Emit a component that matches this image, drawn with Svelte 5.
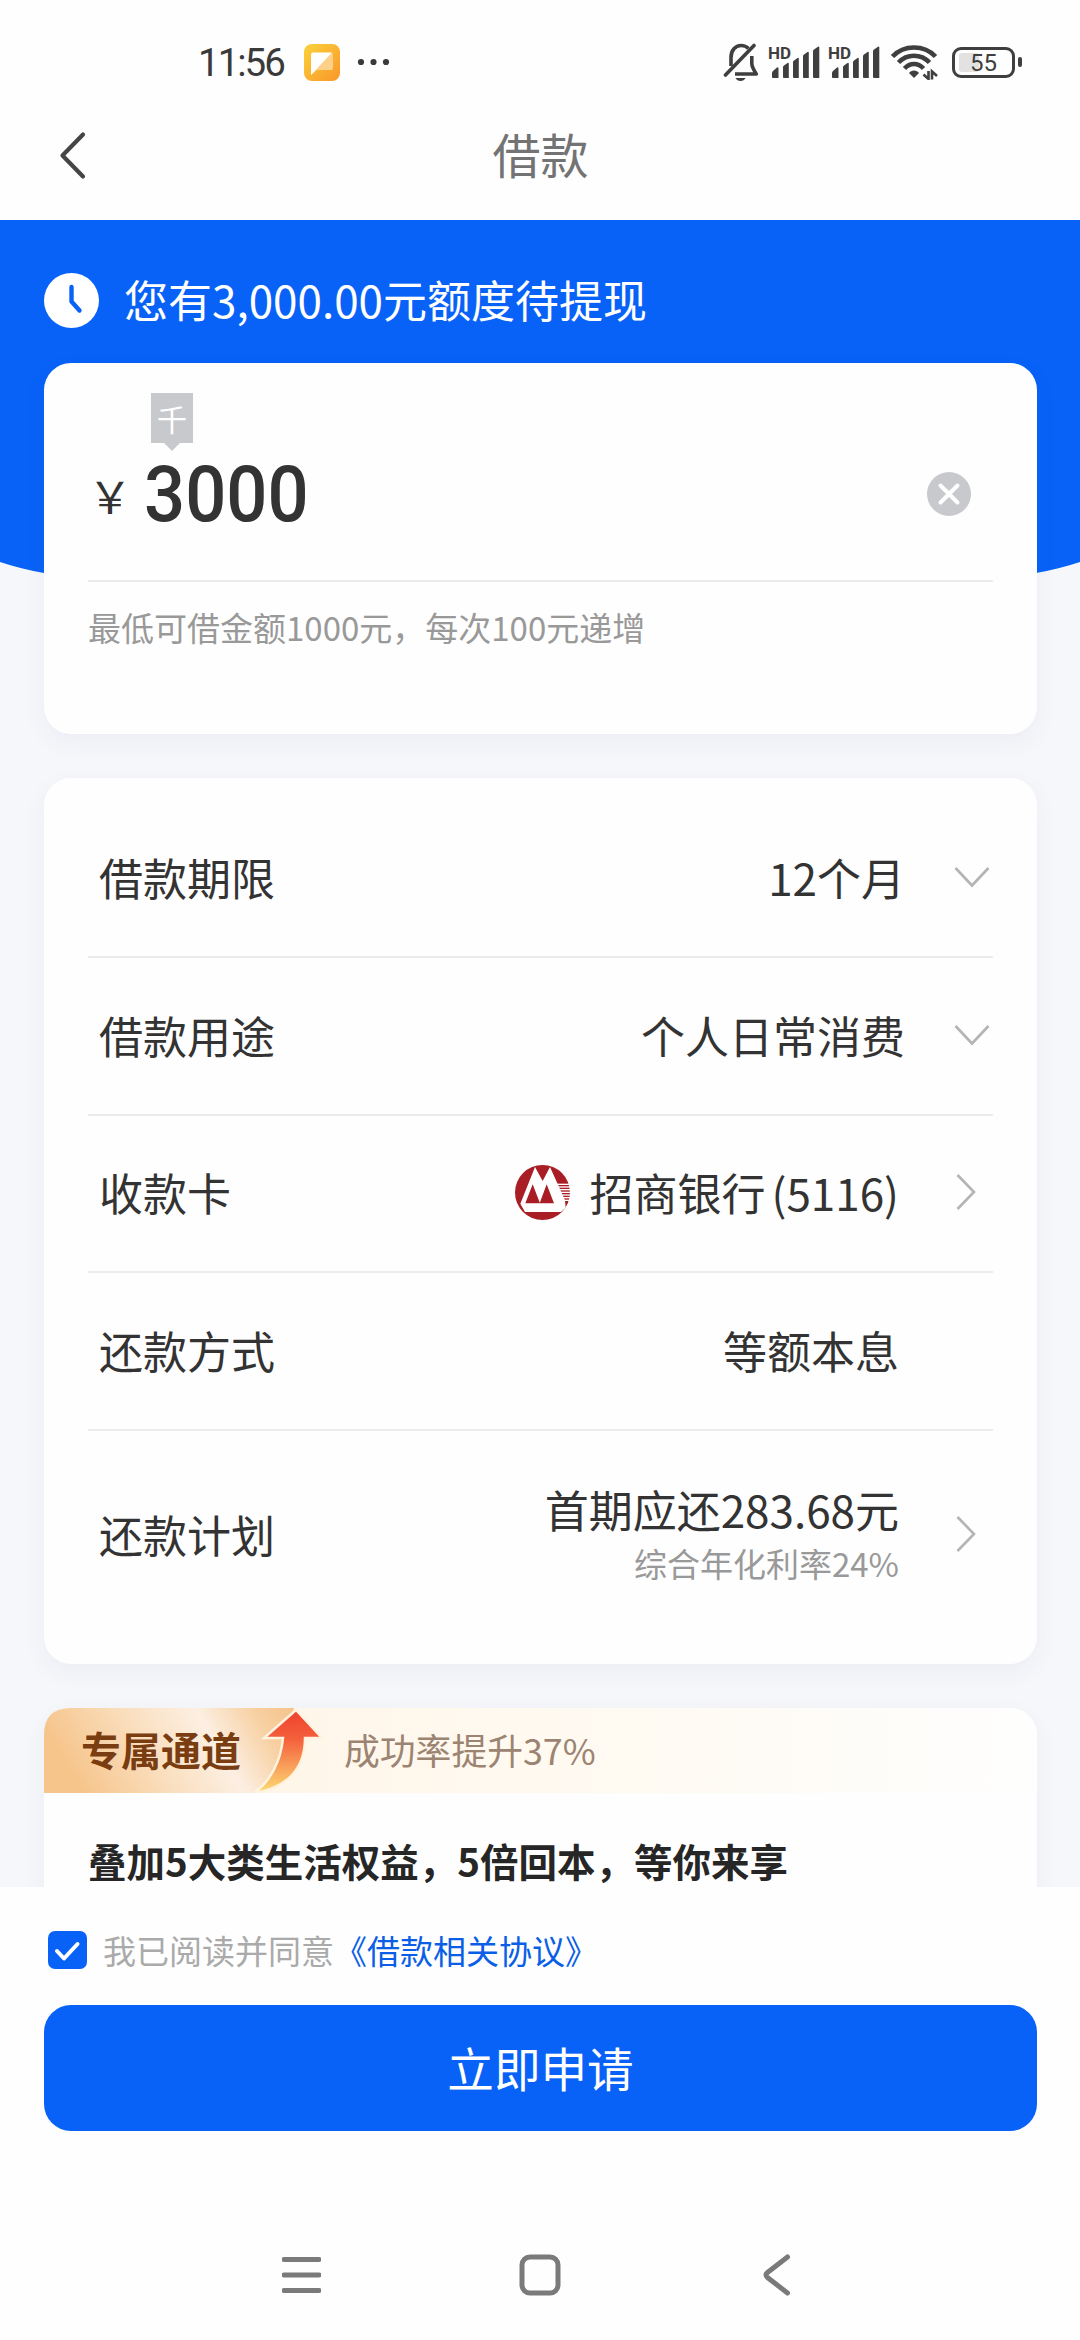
<script lang="ts">
  type Row = {
    label: string;
    value: string;
    arrow: 'down' | 'right' | 'none';
    card?: string;
    note?: string;
  };

  const currency = '\uffe5';
  const amount = '3000';
  const battery = 55;

  const rows: Row[] = [
    { label: '借款期限', value: '12个月', arrow: 'down' },
    { label: '借款用途', value: '个人日常消费', arrow: 'down' },
    { label: '收款卡', value: '招商银行', card: '(5116)', arrow: 'right' },
    { label: '还款方式', value: '等额本息', arrow: 'none' },
    { label: '还款计划', value: '首期应还283.68元', note: '综合年化利率24%', arrow: 'right' }
  ];

  const stripes = [58, 66, 74, 82, 90, 98, 106];
</script>

{#snippet signal()}
  <svg class="signal" width="51" height="34" viewBox="0 0 51 34">
    <text x="-1" y="13.500" class="hd">HD</text>
    <path d="M3 28q0-1 1-2l4-3.500q1.500-.8 1.500 1V33H4q-1 0-1-1z" />
    <path d="M14 22q0-1 1-1.600l3.500-2.400q1.300-.6 1.300.8V33H15q-1 0-1-1z" />
    <path d="M24 17q0-1 1-1.600l3.500-2.400q1.300-.6 1.300.8V33H25q-1 0-1-1z" />
    <path d="M34 11q0-1 1-1.600l3.500-2.400q1.300-.6 1.300.8V33H35q-1 0-1-1z" />
    <path d="M44 6q0-1 1-1.600l4-2.600q1.300-.6 1.300.8V33H45q-1 0-1-1z" />
  </svg>
{/snippet}

<div class="page">
  <header class="top">
    <div class="status-bar">
      <div class="status-left">
        <span class="time">11:56</span>
        <svg class="app-icon" width="36" height="37" viewBox="0 0 36 37">
          <defs>
            <linearGradient id="app-bg" x1="0" y1="0" x2="1" y2="1">
              <stop offset="0" stop-color="#fbd23a" />
              <stop offset="1" stop-color="#f9962a" />
            </linearGradient>
          </defs>
          <rect width="36" height="37" rx="8" fill="url(#app-bg)" />
          <path d="M9 9h18q2 0 2 2v13q0 2-2 2H13l-6 5z" fill="#fdd08a" />
          <path d="M9 8.500h19L7 31V10.500q0-2 2-2z" fill="#fff" />
        </svg>
        <svg class="dots" width="34" height="8" viewBox="0 0 34 8">
          <circle cx="4" cy="4" r="3.100" />
          <circle cx="16.500" cy="4" r="3.100" />
          <circle cx="29" cy="4" r="3.100" />
        </svg>
      </div>
      <div class="status-right">
        <svg class="bell" width="36" height="38" viewBox="0 0 36 38" fill="none" stroke="#3f3f3f" stroke-width="3.600">
          <path d="M8 23V14.500C8 7 12.500 2.500 18 2.500c3 0 5.500 1 7.500 3" />
          <path d="M28.800 13v7.500c0 3.500 2 6.500 4.500 10.500H12" stroke-linejoin="round" />
          <path d="M31 2.500 2.500 32" stroke-linecap="round" />
          <path d="M12.500 35h10q-1.500 3-5 3t-5-3z" fill="#3f3f3f" stroke="none" />
        </svg>
        {@render signal()}
        {@render signal()}
        <svg class="wifi" width="48" height="36" viewBox="0 0 48 36" fill="none" stroke="#3f3f3f" stroke-width="4.600">
          <path d="M2.500 12.500C14 .5 34 .5 45.500 12.500" />
          <path d="M8.500 18.500c8.500-9 22.500-9 31 0" />
          <path d="M14.500 24.500c5.500-6 13.500-6 19 0" />
          <path d="M19 29c2-3.500 8-3.500 10 0l-5 5z" fill="#3f3f3f" stroke="none" />
          <path d="M38.500 27v8l-5-4.500M42 35.500v-8l5 4.500" stroke-width="2.600" />
        </svg>
        <div class="battery">
          <div class="battery-body">
            <span class="battery-fill" style="width: {battery * 0.7}%"></span>
            <span class="battery-text">{battery}</span>
          </div>
          <span class="battery-cap"></span>
        </div>
      </div>
    </div>
    <div class="title-bar">
      <svg class="back" width="30" height="50" viewBox="0 0 30 50">
        <path d="M26 4.500 5.500 25.500 26 46.500" fill="none" stroke="#454545" stroke-width="4.200" stroke-linecap="round" stroke-linejoin="round" />
      </svg>
      <h1>借款</h1>
      <span class="back"></span>
    </div>
  </header>

  <main>
    <svg class="hero" width="1080" height="420" viewBox="0 0 1080 420">
      <path d="M0 0H1080V342Q1059 349 1036 353H44Q21 349 0 342Z" fill="#0962f7" />
    </svg>

    <div class="notice">
      <svg width="55" height="55" viewBox="0 0 55 55">
        <circle cx="27.500" cy="27.500" r="27.500" fill="#fff" />
        <path d="M27.500 14v14.500l8 9" fill="none" stroke="#0962f7" stroke-width="4.400" stroke-linecap="round" stroke-linejoin="round" />
      </svg>
      <span>您有3,000.00元额度待提现</span>
    </div>

    <section class="card amount-card">
      <div class="unit">千</div>
      <div class="amount-row">
        <span class="yen">{currency}</span>
        <span class="amount">{amount}</span>
        <svg class="clear" width="44" height="44" viewBox="0 0 44 44">
          <circle cx="22" cy="22" r="22" fill="#c8c9cc" />
          <path d="m13.500 13.500 17 17m0-17-17 17" stroke="#fff" stroke-width="4" stroke-linecap="round" />
        </svg>
      </div>
      <p class="hint">最低可借金额1000元，每次100元递增</p>
    </section>

    <section class="card rows">
      {#each rows as row}
        <div class="row" class:tall={row.note}>
          <span class="label">{row.label}</span>
          {#if row.card}
            <svg class="bank" width="55" height="55" viewBox="0 0 165 165">
              <circle cx="82.500" cy="82.500" r="82.500" fill="#a91d24" />
              <path d="M60 6 83 48 105 6 150 106 152 128 138 141H30L16 116Z" fill="#fff" />
              <path d="m53 58 22 57H31zM95 58l22 57H74z" fill="#a91d24" />
              {#each stripes as y}
                <path d="M{124 + (y - 58) * 0.35} {y}H165" stroke="#fff" stroke-width="4" />
              {/each}
            </svg>
          {/if}
          <div class="value">
            <span>{row.value}{#if row.card}<span class="card-no">{row.card}</span>{/if}</span>
            {#if row.note}
              <span class="note">{row.note}</span>
            {/if}
          </div>
          <div class="slot {row.arrow}">
            {#if row.arrow === 'down'}
              <svg width="36" height="22" viewBox="0 0 36 22">
                <path d="m1.500 2 16.500 17.500L34.500 2" />
              </svg>
            {:else if row.arrow === 'right'}
              <svg width="20" height="36" viewBox="0 0 20 36">
                <path d="m1.500 1 16.500 17L1.500 35" />
              </svg>
            {/if}
          </div>
        </div>
      {/each}
    </section>

    <section class="card promo">
      <div class="promo-banner">
        <span class="promo-tag">专属通道</span>
        <svg class="promo-arrow" width="280" height="85" viewBox="0 0 280 85">
          <defs>
            <linearGradient id="gold" x1="0" y1="0.2" x2="1" y2="0">
              <stop offset="0" stop-color="#f6c58c" />
              <stop offset="0.35" stop-color="#fadfbf" />
              <stop offset="0.62" stop-color="#fcefe2" />
              <stop offset="0.85" stop-color="#f7cfa0" />
              <stop offset="1" stop-color="#f5c48a" />
            </linearGradient>
            <linearGradient id="rise" x1="0" y1="0" x2="0" y2="1">
              <stop offset="0" stop-color="#f0402c" />
              <stop offset="0.35" stop-color="#f4603c" />
              <stop offset="0.7" stop-color="#f9a35c" />
              <stop offset="1" stop-color="#fddc72" />
            </linearGradient>
          </defs>
          <path d="M0 85V27Q0 0 27 0H250L238 50Q226 76 211 85Z" fill="url(#gold)" />
          <path d="M252 2 278 30H261C261 62 242 80 210 85 227 73 237 52 239 30H220Z" fill="url(#rise)" stroke="#fff3e0" stroke-width="2.500" />
        </svg>
        <span class="promo-note">成功率提升37%</span>
      </div>
      <h2>叠加5大类生活权益，5倍回本，等你来享</h2>
    </section>
  </main>

  <footer>
    <div class="agree">
      <svg width="39" height="38" viewBox="0 0 39 38">
        <rect width="39" height="38" rx="7" fill="#0962f7" />
        <path d="m9 20 7 7.500L29.500 13" fill="none" stroke="#fff" stroke-width="4" stroke-linecap="round" stroke-linejoin="round" />
      </svg>
      <span class="agree-text">我已阅读并同意</span>
      <span class="agree-link">《借款相关协议》</span>
    </div>
    <button class="apply">立即申请</button>
    <nav>
      <svg width="39" height="42" viewBox="0 0 39 42">
        <path d="M2 5.500h35M2 21h35M2 36.500h35" />
      </svg>
      <svg class="home" width="42" height="42" viewBox="0 0 42 42">
        <rect x="3" y="3" width="36" height="36" rx="8" />
      </svg>
      <svg width="30" height="42" viewBox="0 0 30 42">
        <path d="M25.500 3 5.500 18.500q-3 2.500 0 5L25.500 39" />
      </svg>
    </nav>
  </footer>
</div>

<style>
  :global(body) {
    margin: 0;
  }

  .page {
    display: flex;
    flex-direction: column;
    width: 1080px;
    height: 2340px;
    overflow: hidden;
    background: #f5f7fa;
    color: #333;
    font-family: 'Noto Sans CJK SC', sans-serif;
    font-size: 44px;
  }

  svg {
    display: block;
    flex: none;
  }

  .top {
    height: 220px;
    background: #fefefe;
  }

  .status-bar {
    display: flex;
    justify-content: space-between;
    align-items: center;
    height: 96px;
    padding: 14px 58px 0 198px;
  }

  .status-left,
  .status-right {
    display: flex;
    align-items: center;
  }

  .time {
    width: 106px;
    font-family: Roboto, sans-serif;
    font-size: 38.5px;
    letter-spacing: -2px;
    color: #3a3a3a;
  }

  .dots {
    margin-left: 17px;
    fill: #3a3a3a;
  }

  .bell {
    margin-right: 10px;
  }

  .signal {
    margin-right: 9px;
    overflow: visible;
    fill: #3f3f3f;
  }

  .hd {
    font: 700 17px Roboto, sans-serif;
  }

  .wifi {
    margin: 0 14px 0 1px;
  }

  .battery {
    display: flex;
    align-items: center;
    gap: 3px;
  }

  .battery-body {
    position: relative;
    box-sizing: border-box;
    width: 63px;
    height: 31px;
    padding: 3px;
    border: 3px solid #3f3f3f;
    border-radius: 9px;
  }

  .battery-fill {
    display: block;
    height: 100%;
    margin-left: 1px;
    background: #e2e2e2;
    border-radius: 3px;
  }

  .battery-text {
    position: absolute;
    inset: 0;
    font-family: Roboto, sans-serif;
    font-size: 24px;
    line-height: 26px;
    text-align: center;
    color: #3f3f3f;
  }

  .battery-cap {
    width: 4px;
    height: 10px;
    border-radius: 2px;
    background: #3f3f3f;
  }

  .title-bar {
    display: flex;
    justify-content: space-between;
    align-items: center;
    height: 90px;
    padding: 0 57px;
  }

  .back {
    width: 30px;
  }

  h1 {
    margin: 0 0 4px 1px;
    font-size: 48px;
    font-weight: 400;
    line-height: 70px;
    color: #737373;
  }

  main {
    position: relative;
    height: 1667px;
    overflow: hidden;
  }

  .hero {
    position: absolute;
    top: 0;
    left: 0;
  }

  .notice {
    position: relative;
    display: flex;
    align-items: center;
    gap: 25px;
    height: 126px;
    padding: 17px 44px 0;
    color: #fff;
  }

  .notice span {
    margin-bottom: 2px;
  }

  .card {
    position: relative;
    box-sizing: border-box;
    margin: 0 43px 44px 44px;
    padding: 0 44px;
    border-radius: 27px;
    background: #fefefe;
    box-shadow: 0 8px 24px rgba(50, 60, 130, 0.05);
  }

  .amount-card {
    height: 371px;
    padding-top: 30px;
  }

  .unit {
    position: relative;
    width: 42px;
    height: 50px;
    margin-left: 63px;
    background: #c8c9cc;
    color: #fff;
    font-size: 30px;
    line-height: 50px;
    text-align: center;
  }

  .unit::after {
    content: '';
    position: absolute;
    top: 50px;
    left: 13px;
    border: 8px solid transparent;
    border-top-color: #c8c9cc;
    border-bottom: 0;
  }

  .amount-row {
    display: flex;
    align-items: center;
    height: 88px;
    padding: 8px 22px 41px 0;
    border-bottom: 2px solid #ececec;
  }

  .yen {
    width: 56px;
    font-size: 44px;
  }

  .amount {
    flex: 1;
    font-family: Roboto, sans-serif;
    font-size: 77.5px;
    font-weight: 500;
    line-height: 88px;
    transform: scaleX(0.935);
    transform-origin: left;
  }

  .clear {
    margin-bottom: 2px;
  }

  .hint {
    margin: 21px 0 0;
    font-size: 33px;
    line-height: 48px;
    color: #999;
  }

  .rows {
    height: 886px;
    padding-top: 22px;
  }

  .row {
    box-sizing: border-box;
    display: flex;
    align-items: center;
    height: 157.8px;
    padding: 0 0 2px 11px;
    border-bottom: 2px solid #ececec;
  }

  .row.tall {
    height: 208px;
    border-bottom: 0;
  }

  .label {
    flex: 1;
  }

  .bank {
    margin-right: 20px;
  }

  .value {
    display: flex;
    flex-direction: column;
    align-items: flex-end;
    line-height: 58px;
  }

  .card-no {
    margin-left: 6px;
  }

  .note {
    font-size: 33px;
    line-height: 50px;
    color: #999;
  }

  .slot {
    box-sizing: border-box;
    width: 94px;
    padding-left: 57px;
  }

  .slot.down {
    width: 88px;
    padding-left: 49px;
  }

  .slot path {
    fill: none;
    stroke: #b4b4b4;
    stroke-width: 2.6;
  }

  .promo {
    height: 300px;
    padding: 0;
  }

  .promo-banner {
    position: relative;
    display: flex;
    align-items: center;
    height: 85px;
    border-radius: 27px 27px 0 0;
    background: linear-gradient(90deg, #fff6ea 25%, #fffaf1 55%, #fefefe 100%);
  }

  .promo-arrow {
    position: absolute;
    top: 0;
    left: 0;
  }

  .promo-tag {
    position: relative;
    z-index: 1;
    width: 263px;
    margin-bottom: 4px;
    padding-left: 37px;
    font-size: 40px;
    font-weight: 700;
    color: #7a3d12;
  }

  .promo-note {
    margin-bottom: 3px;
    font-size: 35.8px;
    color: #9c8472;
  }

  h2 {
    margin: 41px 44px 0;
    font-size: 38.5px;
    font-weight: 700;
    line-height: 52px;
    color: #262626;
    white-space: nowrap;
  }

  footer {
    position: relative;
    height: 453px;
    background: #fefefe;
  }

  .agree {
    display: flex;
    align-items: center;
    height: 48px;
    padding: 39px 48px 31px;
    font-size: 33px;
  }

  .agree-text {
    margin-left: 16px;
    color: #aaa;
  }

  .agree-link {
    color: #0a5fe6;
  }

  .apply {
    display: block;
    width: 993px;
    height: 126px;
    margin: 0 44px;
    padding: 0 0 3px;
    border: 0;
    border-radius: 27px;
    background: #0962f7;
    color: #fff;
    font-family: inherit;
    font-size: 46.6px;
  }

  nav {
    display: flex;
    justify-content: space-between;
    padding: 123px 288px 0 282px;
  }

  nav svg {
    fill: none;
    stroke: #7a7a7a;
    stroke-width: 5;
    stroke-linecap: round;
  }

  .home {
    margin-right: 4px;
  }
</style>
